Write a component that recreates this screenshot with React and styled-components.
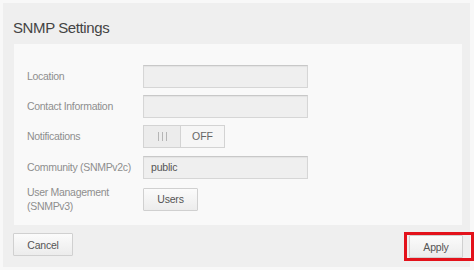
import React from "react";
import styled, { createGlobalStyle } from "styled-components";

const GlobalStyle = createGlobalStyle`
  html, body {
    margin: 0;
    padding: 0;
    background: #f8f8f8;
    font-family: "Liberation Sans", Arial, sans-serif;
  }
  body {
    padding: 3px 4px 3px 3px;
    overflow: hidden;
  }
`;

const Panel = styled.div`
  width: 467px;
  height: 264px;
  box-sizing: border-box;
  background: #efefef;
  padding: 14px 7px 0 10px;
  display: flex;
  flex-direction: column;
`;

const Title = styled.h1`
  margin: 0 0 5px 0;
  font-size: 15px;
  letter-spacing: -0.4px;
  font-weight: normal;
  color: #444;
  line-height: 22px;
`;

const Card = styled.div`
  margin-left: 1px;
  width: 448px;
  height: 181px;
  box-sizing: border-box;
  background: #f9f9f9;
  padding: 21px 0 0 13px;
  display: flex;
  flex-direction: column;
  gap: 8px;
`;

const Row = styled.div`
  display: flex;
  align-items: center;
  height: 22px;
  margin-top: ${({ $top }) => $top || 0}px;
`;

const Label = styled.div`
  width: 116px;
  font-size: 10.5px;
  letter-spacing: -0.3px;
  line-height: 14px;
  color: #8e8e8e;
`;

const Input = styled.div`
  width: 165px;
  height: 23px;
  box-sizing: border-box;
  background: #efefef;
  border: 1px solid #d6d6d6;
  border-top-color: #c8c8c8;
  box-shadow: inset 0 1px 1px rgba(0, 0, 0, 0.05);
  font-size: 10.5px;
  letter-spacing: -0.2px;
  color: #555;
  padding-left: 7px;
  display: flex;
  align-items: center;
`;

const Toggle = styled.div`
  display: flex;
  width: 82px;
  height: 23px;
  box-sizing: border-box;
  border: 1px solid #d3d3d3;
`;

const ToggleHandle = styled.div`
  width: 36px;
  background: #ececec;
  border-right: 1px solid #d3d3d3;
  display: flex;
  align-items: center;
  justify-content: center;
  gap: 3px;
`;

const Bar = styled.span`
  width: 1px;
  height: 9px;
  background: #b5b5b5;
`;

const ToggleText = styled.div`
  flex: 1;
  background: #f6f6f6;
  font-size: 10.5px;
  color: #666;
  display: flex;
  align-items: center;
  justify-content: center;
`;

const Button = styled.button`
  width: ${({ $w }) => $w}px;
  height: 23px;
  box-sizing: border-box;
  border: 1px solid #d0d0d0;
  border-radius: 1px;
  background: linear-gradient(#fbfbfb, #ececec);
  font-family: "Liberation Sans", Arial, sans-serif;
  font-size: 10.5px;
  letter-spacing: -0.2px;
  color: #555;
  padding: 0;
  margin-top: ${({ $top }) => $top || 0}px;
  cursor: pointer;
`;

const Footer = styled.div`
  display: flex;
  justify-content: space-between;
  align-items: flex-start;
  margin-top: 7px;
`;

const Highlight = styled.div`
  display: flex;
  flex-shrink: 0;
  border: 3px solid #e3121b;
  padding: 0 8px 0 2px;
  margin-right: -11px;
`;

export default function App() {
  return (
    <>
      <GlobalStyle />
      <Panel>
        <Title>SNMP Settings</Title>
        <Card>
          <Row>
            <Label>Location</Label>
            <Input />
          </Row>
          <Row>
            <Label>Contact Information</Label>
            <Input />
          </Row>
          <Row>
            <Label>Notifications</Label>
            <Toggle>
              <ToggleHandle>
                <Bar />
                <Bar />
                <Bar />
              </ToggleHandle>
              <ToggleText>OFF</ToggleText>
            </Toggle>
          </Row>
          <Row $top={1}>
            <Label>Community (SNMPv2c)</Label>
            <Input>public</Input>
          </Row>
          <Row $top={2}>
            <Label>
              User Management
              <br />
              (SNMPv3)
            </Label>
            <Button $w={55}>Users</Button>
          </Row>
        </Card>
        <Footer>
          <Button $w={60} $top={1}>Cancel</Button>
          <Highlight>
            <Button $w={54}>Apply</Button>
          </Highlight>
        </Footer>
      </Panel>
    </>
  );
}
